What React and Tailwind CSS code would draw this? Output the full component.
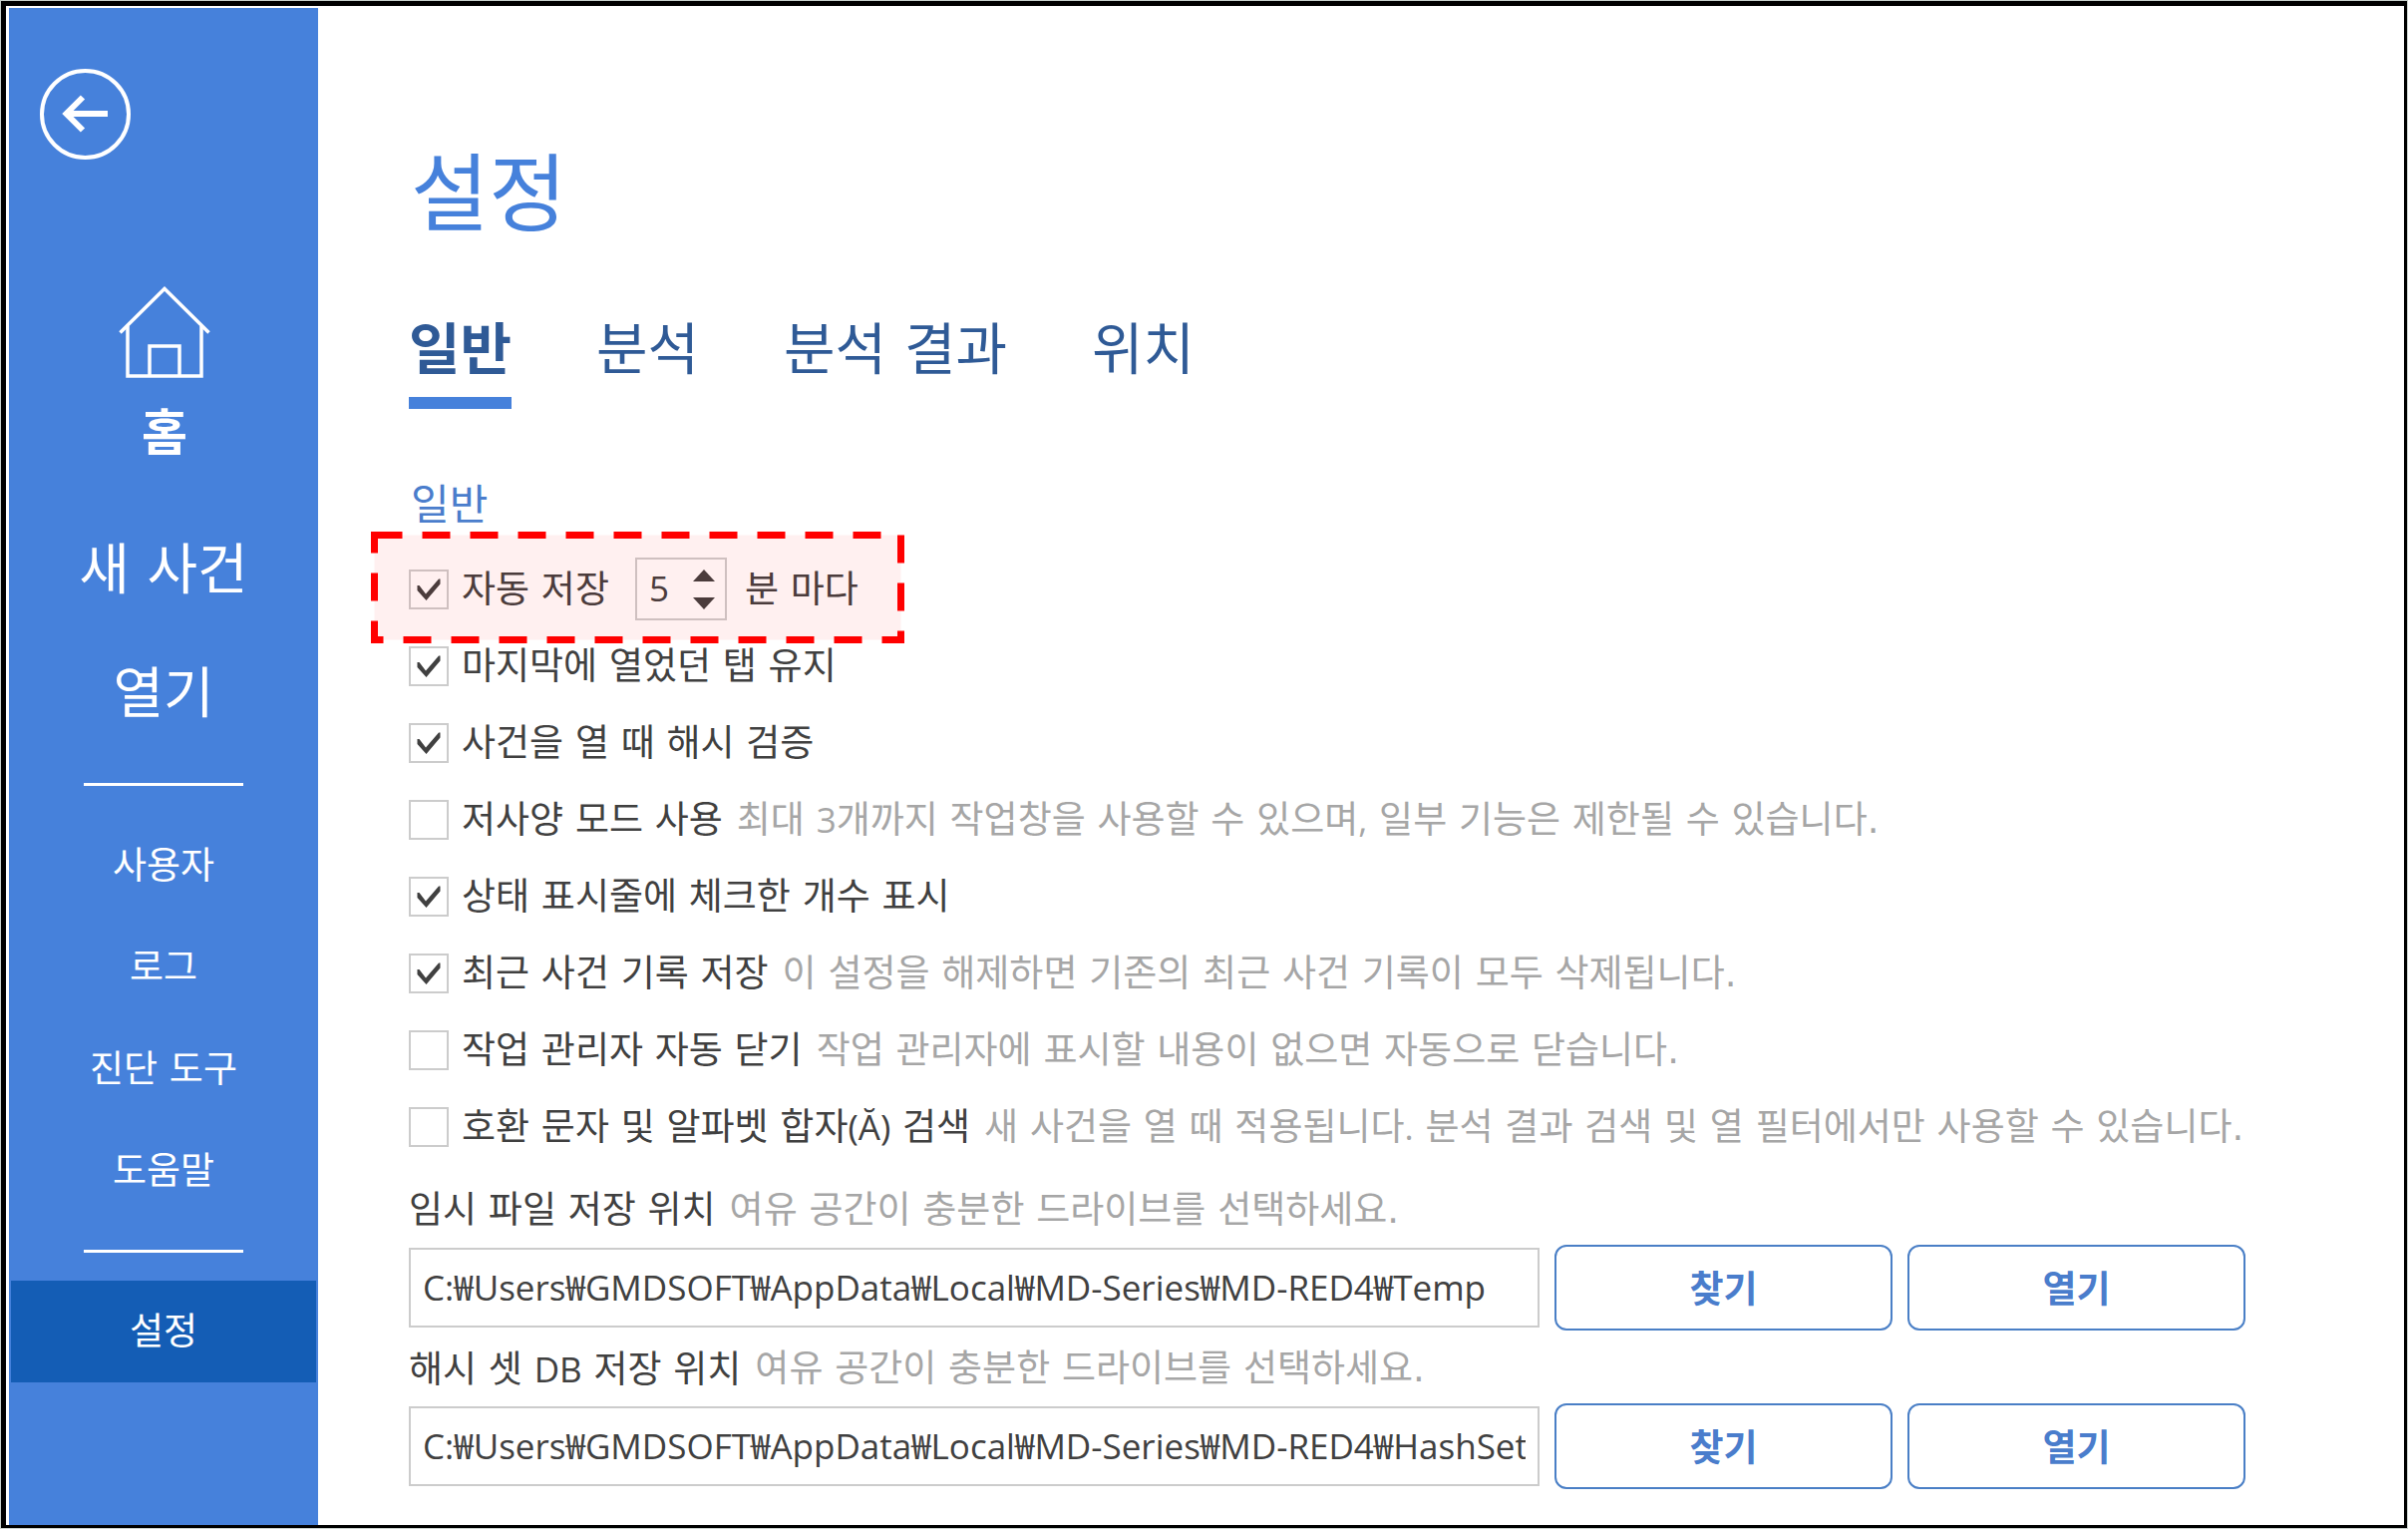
import { useState } from "react";
import clsx from "clsx";

const tabs = ["일반", "분석", "분석 결과", "위치"];

const options = [
    { id: "keep-tabs", label: "마지막에 열었던 탭 유지", checked: true },
    { id: "verify-hash", label: "사건을 열 때 해시 검증", checked: true },
    { id: "low-spec", label: "저사양 모드 사용", hint: <>최대 <Latin>3</Latin>개까지 작업창을 사용할 수 있으며<Latin>,</Latin> 일부 기능은 제한될 수 있습니다.</>, checked: false },
    { id: "status-count", label: "상태 표시줄에 체크한 개수 표시", checked: true },
    { id: "recent-cases", label: "최근 사건 기록 저장", hint: "이 설정을 해제하면 기존의 최근 사건 기록이 모두 삭제됩니다.", checked: true },
    { id: "close-manager", label: "작업 관리자 자동 닫기", hint: "작업 관리자에 표시할 내용이 없으면 자동으로 닫습니다.", checked: false },
    { id: "ligature", label: <>호환 문자 및 알파벳 합자<Latin>(Ă)</Latin> 검색</>, hint: <>새 사건을 열 때 적용됩니다<Latin>.</Latin> 분석 결과 검색 및 열 필터에서만 사용할 수 있습니다.</>, checked: false },
];

const paths = [
    { id: "temp-path", label: "임시 파일 저장 위치", value: "C:₩Users₩GMDSOFT₩AppData₩Local₩MD-Series₩MD-RED4₩Temp" },
    { id: "hash-path", label: <>해시 셋 <Latin>DB</Latin> 저장 위치</>, value: "C:₩Users₩GMDSOFT₩AppData₩Local₩MD-Series₩MD-RED4₩HashSet" },
];

function Latin({ children }) {
    return <span className="font-['Open_Sans',sans-serif] text-[35px]">{children}</span>;
}

function Checkbox({ id, defaultChecked }) {
    return (
        <span className="grid shrink-0">
            <input id={id} type="checkbox" defaultChecked={defaultChecked} className="peer col-start-1 row-start-1 size-10 appearance-none border-2 border-[#cccccc] bg-white" />
            <svg viewBox="0 0 40 40" className="pointer-events-none invisible col-start-1 row-start-1 size-10 peer-checked:visible">
                <path d="M8.500 16 L10.500 16 L17 24.500 L30 9.500 L31.500 9.500 V14.500 L17.500 31 L8.500 21 Z" fill="#404040" />
            </svg>
        </span>
    );
}

function HomeIcon() {
    return (
        <svg viewBox="0 0 92 92" className="size-[92px]" fill="none" stroke="currentColor" strokeWidth="3.500">
            <path d="M1.500 46.500 L46 2.500 L90.500 46.500" />
            <path d="M9 40 V90 H83 V40" />
            <path d="M31 90 V60 H61 V90" />
        </svg>
    );
}

function SideLink({ children, active }) {
    return (
        <a href="#" className={clsx("mx-[2px] flex h-[102px] items-center justify-center pt-0.5 text-[37px]", active && "bg-[#145db5]")}>
            {children}
        </a>
    );
}

function SideMenu() {
    return (
        <nav className="flex w-[310px] shrink-0 flex-col bg-[#4681db] pt-[61px] text-white">
            <button type="button" aria-label="뒤로" className="ml-[31px] size-[91px]">
                <svg viewBox="0 0 91 91" fill="none" stroke="currentColor">
                    <circle cx="45.500" cy="45.500" r="43.500" strokeWidth="4" />
                    <path d="M68 45 H27" strokeWidth="6" />
                    <path d="M43 28.500 L26.500 45 L43 61.500" strokeWidth="6" />
                </svg>
            </button>
            <a href="#" className="mt-[127px] mb-[41px] flex flex-col items-center gap-6 pl-0.5 text-[50px] leading-[64px] font-bold">
                <HomeIcon />
                홈
            </a>
            <a href="#" className="flex h-[124px] items-center justify-center pt-0.5 text-[55px]">새 사건</a>
            <a href="#" className="flex h-[124px] items-center justify-center pt-0.5 text-[55px]">열기</a>
            <hr className="mx-[75px] my-[29px] border-t-3 border-white" />
            <SideLink>사용자</SideLink>
            <SideLink>로그</SideLink>
            <SideLink>진단 도구</SideLink>
            <SideLink>도움말</SideLink>
            <hr className="mx-[75px] my-7 border-t-3 border-white" />
            <SideLink active>설정</SideLink>
        </nav>
    );
}

function AutoSaveRow() {
    const [minutes, setMinutes] = useState(5);

    return (
        <div className="relative flex h-[77px] items-center">
            <Checkbox id="auto-save" defaultChecked />
            <label htmlFor="auto-save" className="ml-[13px] pt-0.5">자동 저장</label>
            <div className="ml-[26px] flex h-[63px] w-[92px] items-center border-2 border-[#cccccc] bg-white pr-2.5 pl-3">
                <input aria-label="자동 저장 간격" value={minutes} onChange={(e) => setMinutes(Number(e.target.value) || 0)} className="w-6 min-w-0 bg-transparent font-['Open_Sans',sans-serif] text-[35px] outline-none" />
                <div className="ml-auto flex flex-col gap-4">
                    <button type="button" aria-label="늘리기" onClick={() => setMinutes(minutes + 1)}>
                        <svg viewBox="0 0 22 12" className="h-3 w-[22px]"><path d="M11 0 L22 12 H0 Z" fill="#404040" /></svg>
                    </button>
                    <button type="button" aria-label="줄이기" onClick={() => setMinutes(minutes - 1)}>
                        <svg viewBox="0 0 22 12" className="h-3 w-[22px]"><path d="M0 0 H22 L11 12 Z" fill="#404040" /></svg>
                    </button>
                </div>
            </div>
            <span className="ml-[18px] pt-0.5">분 마다</span>
            {/* dashed highlight over the row */}
            <svg viewBox="0 0 535 112" className="pointer-events-none absolute top-[-19px] left-[-38px] h-[112px] w-[535px]">
                <rect x="3.500" y="3.500" width="528" height="105" fill="#ff0000" fillOpacity="0.06" stroke="#ff0000" strokeWidth="7" strokeDasharray="28 20" />
            </svg>
        </div>
    );
}

function PathRow({ id, label, value }) {
    return (
        <div className="mb-[7px]">
            <div className="flex h-[60px] gap-3.5 pt-0.5 leading-[60px]">
                <label htmlFor={id}>{label}</label>
                <span className="text-[#a6a6a6]">여유 공간이 충분한 드라이브를 선택하세요.</span>
            </div>
            <div className="mt-[6px] flex items-center gap-[15px]">
                <input id={id} defaultValue={value} className="h-20 min-w-0 flex-1 border-2 border-[#cccccc] px-3 pb-1.5 font-['Open_Sans','Noto_Sans_CJK_KR',sans-serif] text-[35px] outline-none" />
                <button type="button" className="h-[86px] w-[339px] rounded-xl border-2 border-[#4a7fc6] pt-1.5 font-bold text-[#4a7dcc]">찾기</button>
                <button type="button" className="h-[86px] w-[339px] rounded-xl border-2 border-[#4a7fc6] pt-1.5 font-bold text-[#4a7dcc]">열기</button>
            </div>
        </div>
    );
}

export default function App() {
    const [tab, setTab] = useState("일반");

    return (
        <div className="flex min-h-screen bg-[#c8d0cc] p-px font-['DejaVu_Sans','Noto_Sans_CJK_KR',sans-serif]">
            <div className="flex min-w-0 flex-1 border-t-5 border-r-3 border-b-3 border-l-5 border-black bg-white pt-[2px] pl-[3px]">
                <SideMenu />
                <main className="min-w-0 flex-1 pt-[138px] pr-[159px] pl-[91px] text-[37px] text-[#404040]">
                    <h1 className="pl-0.5 text-[85px] leading-[100px] text-[#4681db]">설정</h1>
                    <div className="mt-[65px] flex gap-[85px] text-[56px] leading-[80px] text-[#2f5a96]">
                        {tabs.map((name) => (
                            <button key={name} type="button" onClick={() => setTab(name)} className={clsx("border-b-12 pb-[7px]", tab === name ? "border-[#4681db] font-bold" : "border-transparent")}>
                                {name}
                            </button>
                        ))}
                    </div>
                    <h2 className="mt-[67px] mb-[15px] pl-0.5 text-[42px] leading-[60px] text-[#4a7dcc]">일반</h2>
                    <AutoSaveRow />
                    {options.map((option) => (
                        <div key={option.id} className="flex h-[77px] items-center whitespace-nowrap">
                            <Checkbox id={option.id} defaultChecked={option.checked} />
                            <label htmlFor={option.id} className="ml-[13px] pt-0.5">{option.label}</label>
                            {option.hint && <span className="ml-3.5 pt-0.5 text-[#a6a6a6]">{option.hint}</span>}
                        </div>
                    ))}
                    <div className="mt-[14px]">
                        {paths.map((path) => (
                            <PathRow key={path.id} {...path} />
                        ))}
                    </div>
                </main>
            </div>
        </div>
    );
}
